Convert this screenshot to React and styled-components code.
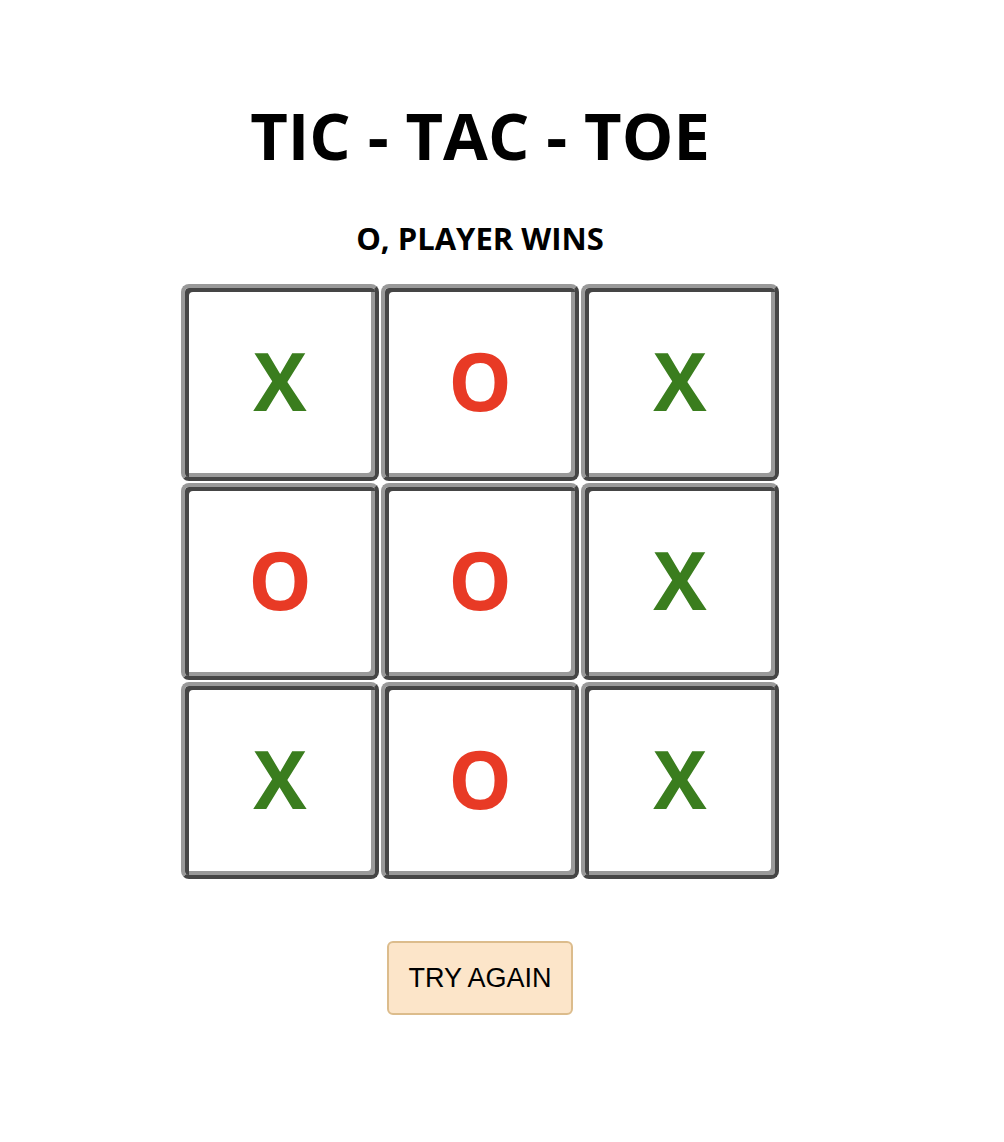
import React from 'react';
import styled, { createGlobalStyle } from 'styled-components';

const GlobalStyle = createGlobalStyle`
  body {
    margin: 0;
    background: #fff;
  }
`;

const Page = styled.div`
  width: 960px;
  display: flex;
  flex-direction: column;
  align-items: center;
  padding-top: 92px;
  font-family: "Open Sans", "Noto Sans", sans-serif;
`;

const Title = styled.h1`
  margin: 0;
  font-size: 65px;
  font-weight: 700;
  line-height: 86px;
  color: #000;
`;

const Status = styled.h2`
  margin: 40px 0 0;
  font-size: 31px;
  font-weight: 700;
  line-height: 40px;
  color: #000;
`;

const Board = styled.div`
  margin-top: 26px;
  display: grid;
  grid-template-columns: repeat(3, 198px);
  grid-auto-rows: 197px;
  gap: 2px;
`;

const Cell = styled.div`
  box-sizing: border-box;
  border: 4px solid;
  border-color: #999 #454545 #454545 #999;
  border-radius: 8px;
  box-shadow: inset 4px 4px 0 #454545, inset -4px -4px 0 #999;
  display: flex;
  align-items: center;
  justify-content: center;
  padding-bottom: 6px;
  font-size: 80px;
  font-weight: 700;
  color: ${(p) => (p.$mark === 'X' ? '#3a7d1e' : '#e83a25')};
`;

const Button = styled.button`
  margin-top: 62px;
  width: 186px;
  height: 74px;
  background: #fce5c9;
  border: 2px solid #dcbc8c;
  border-radius: 6px;
  font-family: "Liberation Sans", Arial, sans-serif;
  font-size: 27px;
  color: #000;
  cursor: pointer;
`;

const board = ['X', 'O', 'X', 'O', 'O', 'X', 'X', 'O', 'X'];

export default function App() {
  return (
    <>
      <GlobalStyle />
      <Page>
        <Title>TIC - TAC - TOE</Title>
        <Status>O, PLAYER WINS</Status>
        <Board>
          {board.map((m, i) => (
            <Cell key={i} $mark={m}>{m}</Cell>
          ))}
        </Board>
        <Button>TRY AGAIN</Button>
      </Page>
    </>
  );
}
